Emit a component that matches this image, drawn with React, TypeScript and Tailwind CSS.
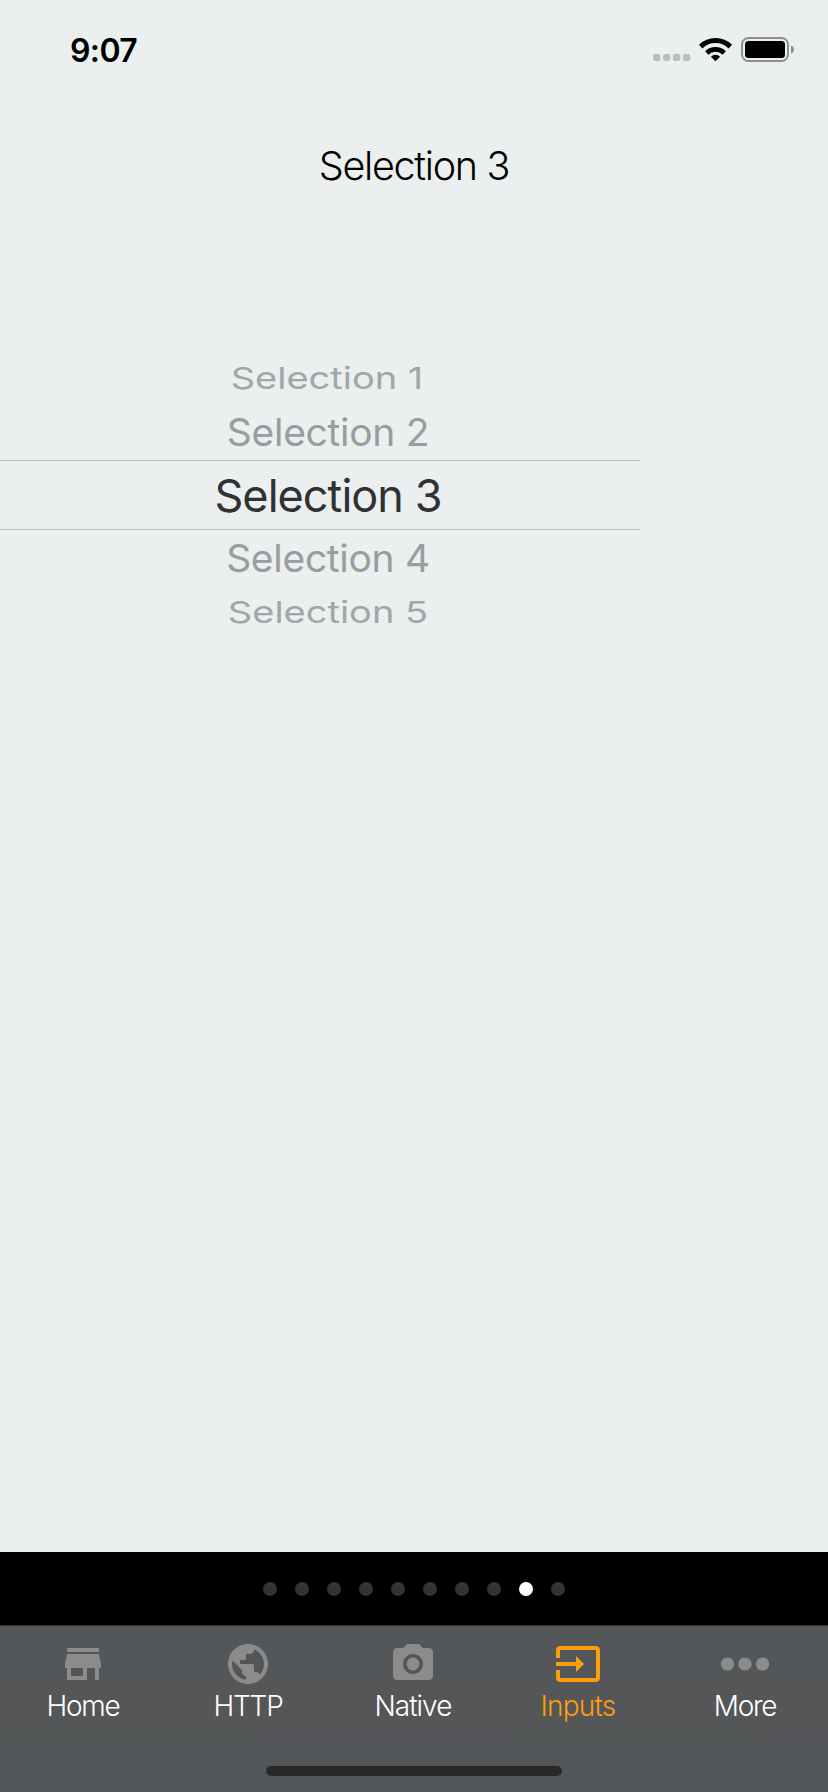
import type { ReactNode } from "react";

const options = [
  { label: "Selection 1", row: "h-[54px] text-[#a3a6a7]", text: "text-[38px] scale-y-[0.8] -translate-x-px -translate-y-px" },
  { label: "Selection 2", row: "h-[54px] text-[#9a9d9e]", text: "text-[39px] tracking-[-0.3px] -translate-y-[1.5px] scale-y-[0.98]" },
  { label: "Selection 3", row: "h-[70px] border-y border-[#bbbebf] text-[#2f3132]", text: "text-[45px] tracking-[-0.95px]" },
  { label: "Selection 4", row: "h-[56px] text-[#9a9d9e]", text: "text-[39px] tracking-[-0.3px] -translate-y-px scale-y-[0.98]" },
  { label: "Selection 5", row: "h-[52px] text-[#a3a6a7]", text: "text-[38px] scale-y-[0.8]" },
];

function TabIcon({ children }: { children: ReactNode }) {
  return (
    <svg viewBox="0 0 24 24" className="size-12" fill="currentColor">
      {children}
    </svg>
  );
}

const tabs = [
  {
    label: "Home",
    text: "tracking-[-1.2px]",
    icon: <path d="M20 4H4v2h16V4zm1 10v-2l-1-5H4l-1 5v2h1v6h10v-6h4v6h2v-6h1zm-9 4H6v-4h6v4z" />,
  },
  {
    label: "HTTP",
    text: "tracking-[-1.2px]",
    icon: (
      <path d="M12 2C6.48 2 2 6.48 2 12s4.48 10 10 10 10-4.480 10-10S17.520 2 12 2zm-1 17.930c-3.950-.490-7-3.850-7-7.930 0-.620.080-1.210.210-1.790L9 15v1c0 1.100.900 2 2 2v1.930zm6.900-2.540c-.260-.810-1-1.390-1.900-1.390h-1v-3c0-.550-.450-1-1-1H8v-2h2c.550 0 1-.450 1-1V7h2c1.100 0 2-.900 2-2v-.410c2.930 1.190 5 4.060 5 7.410 0 2.080-.800 3.970-2.100 5.390z" />
    ),
  },
  {
    label: "Native",
    text: "tracking-[-1px]",
    icon: (
      <>
        <circle cx="12" cy="12" r="3.2" />
        <path d="M9 2L7.170 4H4c-1.100 0-2 .900-2 2v12c0 1.100.900 2 2 2h16c1.100 0 2-.900 2-2V6c0-1.100-.900-2-2-2h-3.170L15 2H9zm3 15c-2.760 0-5-2.240-5-5s2.240-5 5-5 5 2.240 5 5-2.240 5-5 5z" />
      </>
    ),
  },
  {
    label: "Inputs",
    active: true,
    text: "tracking-[-0.8px]",
    icon: (
      <path d="M21 3.010H3c-1.100 0-2 .900-2 2V9h2V4.990h18v14.030H3V15H1v4.010c0 1.100.900 1.980 2 1.980h18c1.100 0 2-.880 2-1.980v-14c0-1.110-.900-2-2-2zM11 16l4-4-4-4v3H1v2h10v3z" />
    ),
  },
  {
    label: "More",
    text: "tracking-[-1.3px]",
    icon: (
      <>
        <circle cx="3.25" cy="12" r="3.3" />
        <circle cx="12" cy="12" r="3.3" />
        <circle cx="20.75" cy="12" r="3.3" />
      </>
    ),
  },
];

function StatusBar() {
  return (
    <header className="flex h-[100px] justify-between pl-[70px] pr-[34px]">
      <span className="pt-[31px] text-[32px] leading-[40px] font-semibold tracking-[-0.6px] text-black">9:07</span>
      <svg width="142" height="30" viewBox="652 34 142 30" className="mt-[34px]">
        <g fill="#bbbebf">
          <rect x="653" y="54" width="7.300" height="7" rx="2" />
          <rect x="663" y="54" width="7.300" height="7" rx="2" />
          <rect x="673" y="54" width="7.300" height="7" rx="2" />
          <rect x="683" y="54" width="7.300" height="7" rx="2" />
        </g>
        <g fill="none" stroke="#000">
          <path d="M700.700 46.600a21.300 21.300 0 0 1 29.600 0" strokeWidth="5" />
          <path d="M706.800 52.900a12.600 12.600 0 0 1 17.400 0" strokeWidth="4.800" />
        </g>
        <path d="M715.500 61.200l-4.600-4.500a6.600 6.600 0 0 1 9.200 0z" />
        <rect x="742" y="38" width="46" height="23" rx="6.500" fill="none" stroke="#8d9091" strokeWidth="2" />
        <rect x="745" y="41" width="40" height="17" rx="3.500" />
        <path d="M791 45.500c4 1.200 4 7 0 8.200z" fill="#8d9091" />
      </svg>
    </header>
  );
}

export default function App() {
  return (
    <div className="flex h-[1792px] w-[828px] flex-col overflow-hidden bg-[#ebeff0] font-['Inter',sans-serif]">
      <StatusBar />
      <main className="flex flex-1 flex-col">
        <h1 className="flex h-[134px] items-center justify-center text-[39.5px] font-light tracking-[-1.300px] text-black">
          Selection 3
        </h1>
        <ul className="mt-[118px] w-[640px]">
          {options.map((o) => (
            <li key={o.label} className={`flex items-center justify-center pl-[16px] whitespace-nowrap ${o.row}`}>
              <span className={`leading-none ${o.text}`}>{o.label}</span>
            </li>
          ))}
        </ul>
      </main>
      <div className="flex h-[73px] items-center justify-center gap-[18px] bg-black">
        {Array.from({ length: 10 }, (_, i) => (
          <span key={i} className={`size-[14px] rounded-full ${i === 8 ? "bg-white" : "bg-[#333333]"}`} />
        ))}
      </div>
      <nav className="flex h-[167px] flex-col border-t border-[#333638] bg-linear-to-b from-[#525759] via-[#555658] to-[#515658]">
        <div className="grid h-[140px] grid-cols-[166px_164px_166px_164px_170px] pt-[14px]">
          {tabs.map((t) => (
            <div key={t.label} className={`flex flex-col items-center ${t.active ? "text-[#ff9d0a]" : "text-[#8b8b8b]"}`}>
              <TabIcon>{t.icon}</TabIcon>
              <span
                className={`mt-[2px] text-[28px] leading-8 font-light ${t.text} ${t.active ? "text-[#ff9d0a]" : "text-white"}`}
              >
                {t.label}
              </span>
            </div>
          ))}
        </div>
        <div className="mx-auto h-[10px] w-[296px] rounded-full bg-[#292929]" />
      </nav>
    </div>
  );
}
